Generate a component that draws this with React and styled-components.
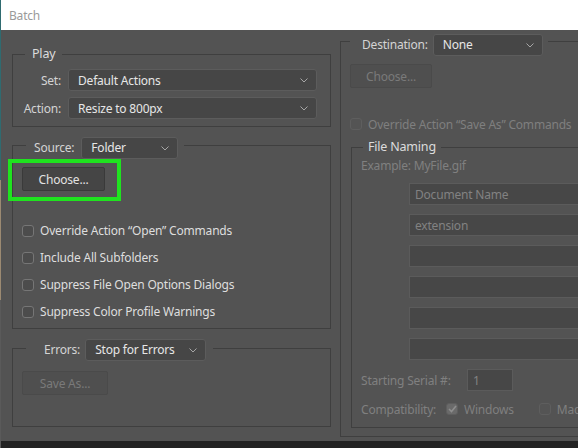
import styled, { createGlobalStyle } from "styled-components";

const GlobalStyle = createGlobalStyle`
  html, body {
    margin: 0;
    padding: 0;
  }

  body {
    width: 578px;
    height: 448px;
    overflow: hidden;
    background: linear-gradient(#2f6b70 0, #2f6b70 180px, #9c8a72 180px, #9c8a72 300px, #5a5a5a 300px);
    font-family: "Noto Sans", "Open Sans", sans-serif;
    font-size: 12px;
    letter-spacing: -0.2px;
  }
`;

const Window = styled.div`
  margin-left: 1px;
  width: 577px;
  height: 448px;
  display: flex;
  flex-direction: column;
  background: #535353;
  overflow: hidden;
`;

const TitleBar = styled.div`
  height: 30px;
  flex-shrink: 0;
  display: flex;
  align-items: center;
  padding-left: 8px;
  background: #ffffff;
  color: #9a9a9a;
  font-size: 12px;
`;

const Body = styled.div`
  flex: 1;
  min-height: 0;
  display: flex;
  gap: 9px;
  padding-left: 11px;
  overflow: hidden;
`;

const Footer = styled.div`
  height: 7px;
  flex-shrink: 0;
  background: #232323;
`;

const Column = styled.div`
  flex-shrink: 0;
  width: ${props => props.$width}px;
  padding-top: ${props => props.$top}px;
  display: flex;
  flex-direction: column;
`;

const Group = styled.div`
  border: 1px solid #3f3f3f;
  margin: ${props => props.$margin || "0"};
  padding-bottom: ${props => props.$bottom || 0}px;
  display: flex;
  flex-direction: column;
  align-items: flex-start;
  align-self: ${props => (props.$stretch ? "stretch" : "auto")};
`;

const Legend = styled.div`
  height: ${props => props.$height || 18}px;
  margin: -${props => props.$lift}px 0 0 ${props => props.$indent}px;
  padding: 0 ${props => props.$right || 6}px 0 ${props => props.$left || 6}px;
  display: flex;
  align-items: center;
  gap: ${props => props.$gap || 6}px;
  background: #535353;
  color: #dcdcdc;
  font-size: ${props => (props.$big ? "12.5px" : "12px")};
  line-height: 18px;
`;

const Label = styled.span`
  color: ${props => (props.$dim ? "#808080" : "#d4d4d4")};
  white-space: nowrap;
  width: ${props => (props.$width ? `${props.$width}px` : "auto")};
  text-align: ${props => props.$align || "left"};
`;

const SelectBox = styled.div`
  width: ${props => (props.$width ? `${props.$width}px` : "auto")};
  height: 22px;
  box-sizing: border-box;
  display: flex;
  align-items: center;
  justify-content: space-between;
  padding: 0 8px 0 9px;
  background: #464646;
  border: 1px solid #5c5c5c;
  border-radius: 3px;
  color: #e6e6e6;
  white-space: nowrap;
`;

const PlayGrid = styled.div`
  align-self: stretch;
  margin-top: 6px;
  padding: 0 13px 0 10px;
  display: grid;
  grid-template-columns: 38px 1fr;
  column-gap: 7px;
  row-gap: 6px;
  align-items: center;
`;

const Button = styled.div`
  width: ${props => props.$width}px;
  height: 24px;
  box-sizing: border-box;
  margin: ${props => props.$margin || "0"};
  display: flex;
  align-items: center;
  justify-content: center;
  background: ${props => (props.$disabled ? "#4f4f4f" : "#454545")};
  border: 1px solid ${props => (props.$disabled ? "#4a4a4a" : "#3a3a3a")};
  border-radius: 2px;
  color: ${props => (props.$disabled ? "#7a7a7a" : "#e2e2e2")};
`;

const Highlighted = styled.div`
  position: relative;
  margin: 8px 0 0 9px;

  &::after {
    content: "";
    position: absolute;
    top: -8px;
    left: -14px;
    right: -16px;
    bottom: -10px;
    border: 4px solid #1fe31f;
    pointer-events: none;
  }
`;

const CheckList = styled.div`
  margin: ${props => props.$margin || "0"};
  display: flex;
  flex-direction: column;
`;

const CheckRow = styled.div`
  height: ${props => props.$height || 27}px;
  display: flex;
  align-items: center;
  gap: 6px;
  margin: ${props => props.$margin || "0"};
  color: ${props => (props.$dim ? "#7f7f7f" : "#dedede")};
  white-space: nowrap;
`;

const Box = styled.span`
  width: 12px;
  height: 12px;
  flex-shrink: 0;
  box-sizing: border-box;
  display: flex;
  align-items: center;
  justify-content: center;
  border: 1px solid ${props => (props.$dim ? "#5e5e5e" : "#767676")};
  border-radius: 3px;
  background: ${props => (props.$checked ? "#6a6a6a" : props.$dim ? "#545454" : "#4c4c4c")};
`;

const Example = styled.div`
  height: 18px;
  padding-left: 9px;
  display: flex;
  align-items: center;
  color: #808080;
`;

const FieldStack = styled.div`
  align-self: stretch;
  margin: 9px 0 0 57px;
  display: flex;
  flex-direction: column;
  gap: 9px;
`;

const TextField = styled.div`
  width: ${props => (props.$width ? `${props.$width}px` : "auto")};
  height: 22px;
  box-sizing: border-box;
  display: flex;
  align-items: center;
  padding-left: 5px;
  background: #474747;
  border: 1px solid #5b5b5b;
  color: #828282;
  white-space: nowrap;
`;

const FormRow = styled.div`
  height: ${props => props.$height || 22}px;
  margin-top: 9px;
  padding-left: 9px;
  display: flex;
  align-items: center;
  color: #808080;
  white-space: nowrap;
`;

const Chevron = () => (
  <svg width="8" height="5" viewBox="0 0 8 5">
    <polyline points="0.5,0.5 4,4 7.5,0.5" fill="none" stroke="#a6a6a6" strokeWidth="1" />
  </svg>
);

const Check = () => (
  <svg width="9" height="8" viewBox="0 0 9 8">
    <polyline points="1,4 3.5,6.5 8,1" fill="none" stroke="#8e8e8e" strokeWidth="1.6" />
  </svg>
);

const Select = ({ width, value }) => (
  <SelectBox $width={width}>
    <span>{value}</span>
    <Chevron />
  </SelectBox>
);

const sourceOptions = [
  "Override Action \u201COpen\u201D Commands",
  "Include All Subfolders",
  "Suppress File Open Options Dialogs",
  "Suppress Color Profile Warnings",
];

const namingFields = ["Document Name", "extension", "", "", "", ""];

const App = () => {
  return (
    <>
      <GlobalStyle />
      <Window>
        <TitleBar>Batch</TitleBar>

        <Body>
          <Column $width={319} $top={24}>
            <Group $bottom={7}>
              <Legend $big $lift={10} $indent={12} $left={7} $right={7}>Play</Legend>
              <PlayGrid>
                <Label $align="right">Set:</Label>
                <Select value="Default Actions" />
                <Label $align="right">Action:</Label>
                <Select value="Resize to 800px" />
              </PlayGrid>
            </Group>

            <Group $margin="18px 0 0 0" $bottom={3}>
              <Legend $height={22} $lift={9} $indent={13} $left={8} $right={6} $gap={7}>
                <Label>Source:</Label>
                <Select width={97} value="Folder" />
              </Legend>
              <Highlighted>
                <Button $width={83}>Choose...</Button>
              </Highlighted>
              <CheckList $margin="26px 0 0 9px">
                {sourceOptions.map(text => (
                  <CheckRow key={text}>
                    <Box />
                    {text}
                  </CheckRow>
                ))}
              </CheckList>
            </Group>

            <Group $margin="19px 0 0 0" $bottom={31}>
              <Legend $height={22} $lift={10} $indent={13} $left={18} $right={7} $gap={5}>
                <Label>Errors:</Label>
                <Select width={121} value="Stop for Errors" />
              </Legend>
              <Button $disabled $width={86} $margin="10px 0 0 9px">Save As...</Button>
            </Group>
          </Column>

          <Column $width={420} $top={11}>
            <Group $bottom={8}>
              <Legend $height={22} $lift={8} $indent={9} $left={12} $right={5} $gap={5}>
                <Label>Destination:</Label>
                <Select width={110} value="None" />
              </Legend>
              <Button $disabled $width={82} $margin="8px 0 0 9px">Choose...</Button>
              <CheckRow $dim $height={18} $margin="27px 0 0 9px">
                <Box $dim />
                Override Action &ldquo;Save As&rdquo; Commands
              </CheckRow>

              <Group $stretch $margin="14px 0 0 10px" $bottom={9}>
                <Legend $big $lift={10} $indent={11} $left={5} $right={5}>File Naming</Legend>
                <Example>Example: MyFile.gif</Example>
                <FieldStack>
                  {namingFields.map((text, i) => (
                    <TextField key={i}>{text}</TextField>
                  ))}
                </FieldStack>
                <FormRow>
                  <Label $dim $width={106}>Starting Serial #:</Label>
                  <TextField $width={46}>1</TextField>
                </FormRow>
                <FormRow $height={18}>
                  <Label $dim $width={85}>Compatibility:</Label>
                  <CheckRow $dim $height={18}>
                    <Box $dim $checked>
                      <Check />
                    </Box>
                    Windows
                  </CheckRow>
                  <CheckRow $dim $height={18} $margin="0 0 0 25px">
                    <Box $dim />
                    Mac OS
                  </CheckRow>
                </FormRow>
              </Group>
            </Group>
          </Column>
        </Body>

        <Footer />
      </Window>
    </>
  );
};

export default App;
